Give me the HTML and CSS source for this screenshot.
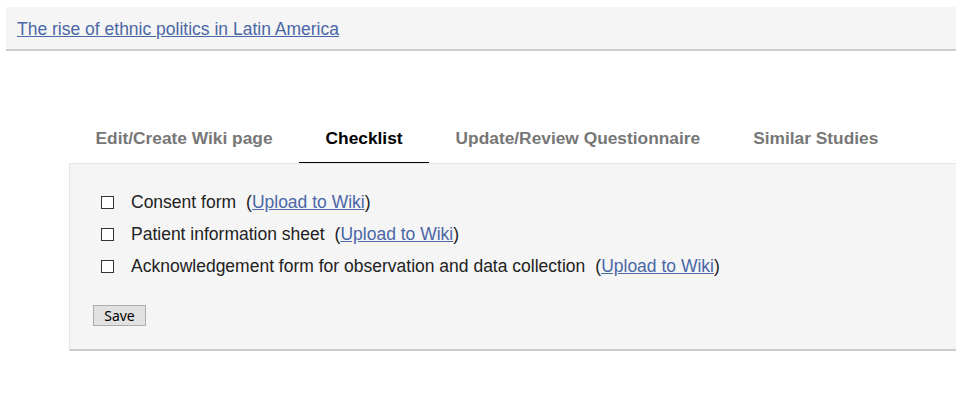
FILE: index.html
```html
<!DOCTYPE html>
<html>
<head>
<meta charset="utf-8">
<link rel="stylesheet" href="styles.css">
</head>
<body>
<div class="header">
  <a href="#" class="title-link">The rise of ethnic politics in Latin America</a>
</div>
<ul class="tabs">
  <li class="tab">Edit/Create Wiki page</li>
  <li class="tab active">Checklist</li>
  <li class="tab">Update/Review Questionnaire</li>
  <li class="tab">Similar Studies</li>
</ul>
<div class="panel">
  <ul class="checklist">
    <li class="item"><input type="checkbox" class="box"><span>Consent form<span class="gap"></span>(<a href="#">Upload to Wiki</a>)</span></li>
    <li class="item"><input type="checkbox" class="box"><span>Patient information sheet<span class="gap"></span>(<a href="#">Upload to Wiki</a>)</span></li>
    <li class="item"><input type="checkbox" class="box"><span>Acknowledgement form for observation and data collection<span class="gap"></span>(<a href="#">Upload to Wiki</a>)</span></li>
  </ul>
  <button class="save">Save</button>
</div>
</body>
</html>
```
FILE: styles.css
```css
html, body {
  margin: 0;
  padding: 0;
  background: #fff;
  font-family: "Liberation Sans", Arial, sans-serif;
}
body {
  padding-top: 7px;
}
a {
  color: #4a67a6;
  text-decoration: underline;
}
.header {
  margin-left: 6px;
  height: 42px;
  background: #f5f5f5;
  border-bottom: 2px solid #cccccc;
  display: flex;
  align-items: center;
  padding-left: 11px;
}
.title-link {
  font-size: 17.5px;
  line-height: 20px;
  margin-top: 1px;
}
.tabs {
  list-style: none;
  margin: 67px 0 0 69px;
  padding: 0;
  display: flex;
}
.tab {
  font-size: 17.33px;
  line-height: 20px;
  font-weight: bold;
  color: #777777;
  padding: 10px 26.5px 14px;
  border-bottom: 1px solid transparent;
}
.tab.active {
  color: #000;
  border-bottom-color: #000;
}
.panel {
  margin-left: 69px;
  background: #f5f5f5;
  border-top: 1px solid #e6e6e6;
  border-left: 1px solid #e6e6e6;
  border-bottom: 2px solid #cccccc;
  padding: 22px 0 23px 23px;
}
.checklist {
  list-style: none;
  margin: 0 0 0 8px;
  padding: 0;
}
.item {
  display: flex;
  align-items: center;
  height: 32px;
  font-size: 17.5px;
  color: #222;
}
.gap {
  display: inline-block;
  width: 10px;
}
.box {
  appearance: none;
  -webkit-appearance: none;
  width: 13px;
  height: 13px;
  margin: 0 17px 0 0;
  border: 1px solid #333;
  background: #fff;
  box-sizing: border-box;
  border-radius: 0;
}
.save {
  margin-top: 23px;
  width: 53px;
  height: 21px;
  padding: 0;
  background: #e1e1e1;
  border: 1px solid #adadad;
  border-radius: 0;
  font-family: "Noto Sans", "Open Sans", sans-serif;
  font-size: 14px;
  line-height: 19px;
  color: #000;
  display: block;
}
```
